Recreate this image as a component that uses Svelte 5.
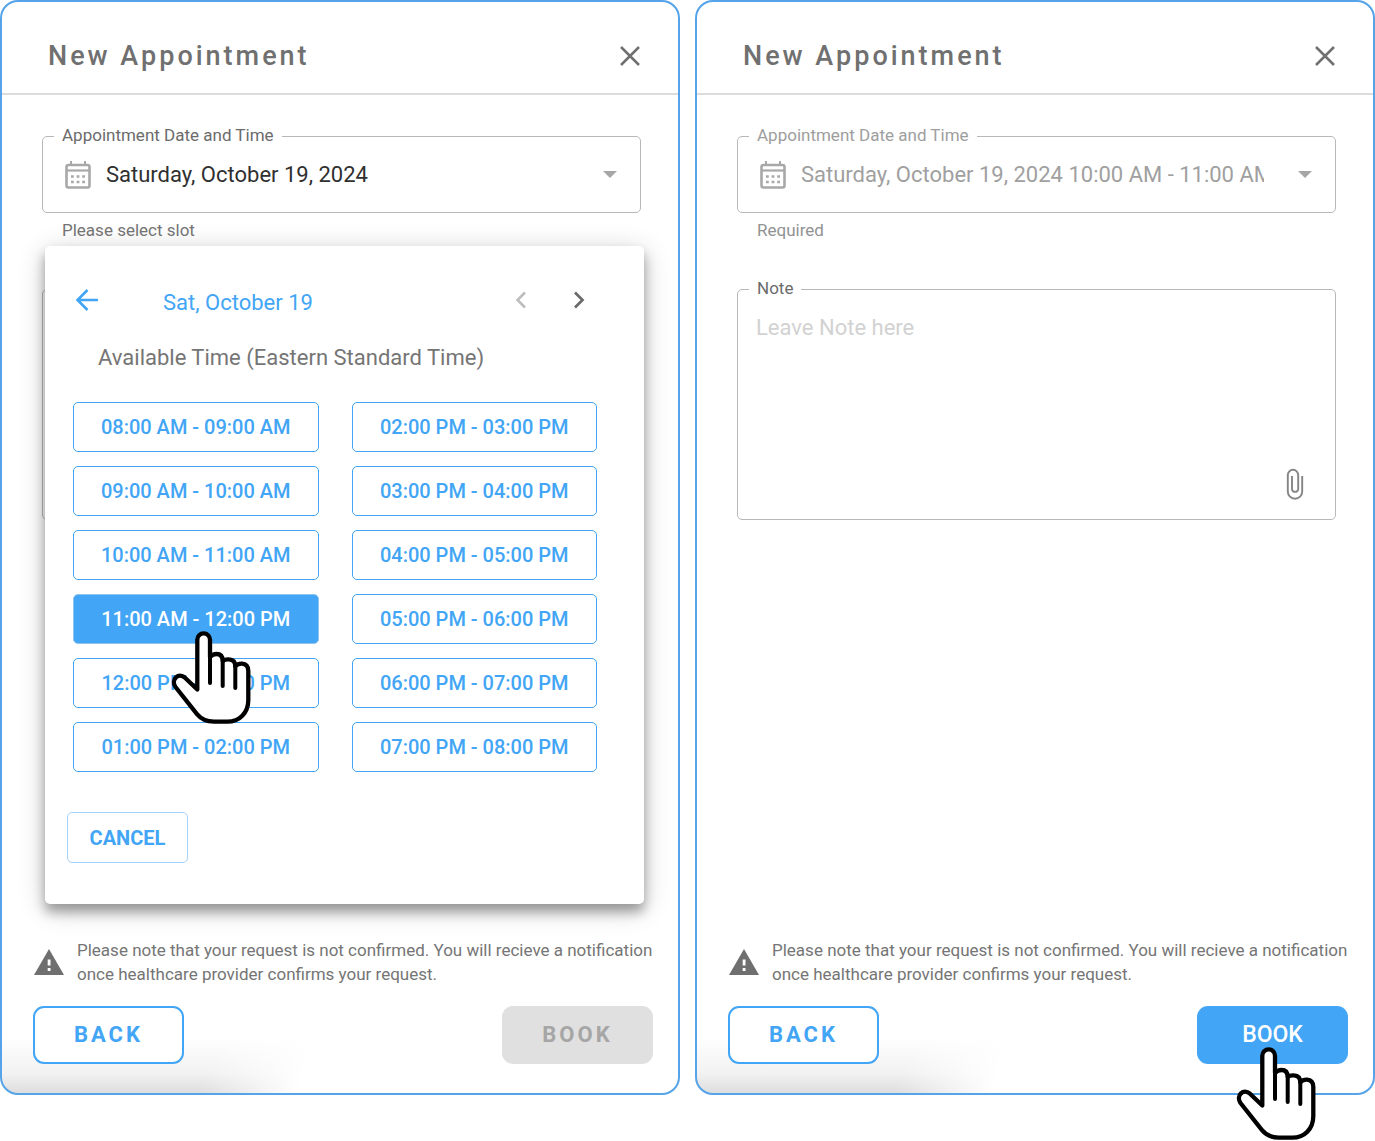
<script>
  const slots = [
    '08:00 AM - 09:00 AM',
    '09:00 AM - 10:00 AM',
    '10:00 AM - 11:00 AM',
    '11:00 AM - 12:00 PM',
    '12:00 PM - 01:00 PM',
    '01:00 PM - 02:00 PM',
    '02:00 PM - 03:00 PM',
    '03:00 PM - 04:00 PM',
    '04:00 PM - 05:00 PM',
    '05:00 PM - 06:00 PM',
    '06:00 PM - 07:00 PM',
    '07:00 PM - 08:00 PM'
  ];
  let selected = $state('11:00 AM - 12:00 PM');
  let note = $state('');
</script>

{#snippet hand()}
  <svg class="hand" viewBox="0 0 80 95" width="80" height="95" aria-hidden="true">
    <path
      d="M26.3 59.5V9.7a6.35 6.35 0 0 1 12.7 0V27q2.600-3 6.500-3 6.200 0 6.200 7 2.700-2 6.300-1.600 6.300.4 6.300 7 2.700-2.900 6.700-2.700 6.300.4 6.300 7.300V70c0 13-9 21.700-21 21.700H43c-8 0-12.500-2-17-7.500L4.500 57C-.5 49.500 7.500 42 14 47.700Z"
      fill="#fff" stroke="#000" stroke-width="4.300" stroke-linejoin="round" />
    <path d="M39 26v27M51.700 30v26M64.300 35v23" fill="none" stroke="#000" stroke-width="4" stroke-linecap="round" />
  </svg>
{/snippet}

{#snippet header()}
  <header>
    <h2>New Appointment</h2>
    <button class="icon-btn" aria-label="Close">
      <svg viewBox="0 0 24 24" width="24" height="24"><path d="M3 3l18 18M21 3L3 21" fill="none" stroke="#707070" stroke-width="2.500" /></svg>
    </button>
  </header>
{/snippet}

{#snippet dateField(id, text, disabled)}
  <div class="outlined date" class:disabled>
    <label for={id}>Appointment Date and Time</label>
    <svg class="cal" viewBox="0 0 26 28" width="26" height="28" aria-hidden="true">
      <rect x="1.500" y="4" width="23" height="22.500" rx="2" fill="none" stroke="#a8a8a8" stroke-width="2.600" />
      <path d="M1 9.500h24" stroke="#a8a8a8" stroke-width="2.200" />
      <path d="M6 0v4M20 0v4" stroke="#a8a8a8" stroke-width="2" />
      <path d="M6 15.500h14M6 21h14" stroke="#a8a8a8" stroke-width="2.600" stroke-dasharray="2.800" />
    </svg>
    <select {id} {disabled}><option>{text}</option></select>
    <svg viewBox="0 0 14 7" width="14" height="7" aria-hidden="true"><path d="M0 0h14L7 7z" fill="#a6a6a6" /></svg>
  </div>
{/snippet}

{#snippet notice()}
  <div class="notice">
    <svg viewBox="0 0 30 26" width="30" height="26" aria-hidden="true">
      <path d="M15 0l15 26H0z" fill="#6f6f6f" />
      <path d="M13.700 10.500h2.800v6h-2.800zM13.700 19h2.800v3h-2.800z" fill="#fff" />
    </svg>
    <p>Please note that your request is not confirmed. You will recieve a notification once healthcare provider confirms your request.</p>
  </div>
{/snippet}

<main>
  <section class="card">
    {@render header()}
    <div class="body">
      {@render dateField('date-a', 'Saturday, October 19, 2024', false)}
      <p class="helper">Please select slot</p>
      <div class="outlined note"></div>

      <div class="popup">
        <div class="nav">
          <button class="icon-btn" aria-label="Back to calendar">
            <svg viewBox="0 0 24 24" width="24" height="24"><path d="M23 12H3M12.500 2L2.500 12l10 10" fill="none" stroke="#42a5f5" stroke-width="2.600" /></svg>
          </button>
          <h3>Sat, October 19</h3>
          <button class="icon-btn" aria-label="Previous day" disabled>
            <svg viewBox="0 0 12 18" width="12" height="18"><path d="M10 1.500L2.500 9l7.500 7.500" fill="none" stroke="#bdbdbd" stroke-width="2.500" /></svg>
          </button>
          <button class="icon-btn" aria-label="Next day">
            <svg viewBox="0 0 12 18" width="12" height="18"><path d="M2 1.500L9.500 9 2 16.500" fill="none" stroke="#6a6a6a" stroke-width="2.700" /></svg>
          </button>
        </div>
        <p class="zone">Available Time (Eastern Standard Time)</p>
        <div class="slots">
          {#each slots as slot}
            <div class="slot-cell">
              <button class="slot" class:active={selected === slot} onclick={() => (selected = slot)}>{slot}</button>
              {#if selected === slot}
                <span class="pointer on-slot">{@render hand()}</span>
              {/if}
            </div>
          {/each}
        </div>
        <button class="cancel">CANCEL</button>
      </div>
    </div>
    {@render notice()}
    <footer>
      <button class="action back">BACK</button>
      <button class="action off" disabled>BOOK</button>
    </footer>
  </section>

  <section class="card">
    {@render header()}
    <div class="body">
      {@render dateField('date-b', 'Saturday, October 19, 2024 10:00 AM - 11:00 AM', true)}
      <p class="helper light">Required</p>
      <div class="outlined note">
        <label for="note">Note</label>
        <textarea id="note" placeholder="Leave Note here" bind:value={note}></textarea>
        <button class="icon-btn clip" aria-label="Attach file">
          <svg viewBox="0 0 18 32" width="18" height="32">
            <path d="M16.200 8v15.500a7.200 7.200 0 0 1-14.400 0V7a5.200 5.200 0 0 1 10.400 0v14.500a3.200 3.200 0 0 1-6.200 0V8" fill="none" stroke="#858585" stroke-width="1.900" />
          </svg>
        </button>
      </div>
    </div>
    {@render notice()}
    <footer>
      <button class="action back">BACK</button>
      <div class="book-wrap">
        <button class="action book">BOOK</button>
        <span class="pointer on-book">{@render hand()}</span>
      </div>
    </footer>
  </section>
</main>

<style>
  :global(body) {
    background: #fff;
    font-family: Roboto, "Liberation Sans", sans-serif;
    color: #757575;
  }
  :global(*) {
    box-sizing: border-box;
  }
  main {
    display: grid;
    grid-template-columns: 1fr 1fr;
    gap: 15px;
    min-height: 100vh;
    padding-bottom: 46px;
  }
  .card {
    display: flex;
    flex-direction: column;
    min-width: 0;
    border: 2px solid #55a3e8;
    border-radius: 18px;
    background:
      linear-gradient(110deg, rgba(255, 255, 255, 0) 560px, #fff 650px),
      linear-gradient(to top, #dedede, #f2f2f2 20px, #fff 56px);
  }
  h2, h3, p {
    margin: 0;
  }
  button, select, textarea {
    font-family: inherit;
    margin: 0;
  }
  svg {
    display: block;
    flex: none;
  }
  header {
    display: flex;
    justify-content: space-between;
    align-items: center;
    height: 93px;
    padding: 16px 36px 0 46px;
    border-bottom: 2px solid #dcdcdc;
  }
  h2 {
    font-size: 27px;
    line-height: 32px;
    font-weight: 500;
    letter-spacing: 3px;
    color: #707070;
  }
  .icon-btn {
    display: flex;
    padding: 0;
    border: 0;
    background: none;
  }
  .body {
    position: relative;
    flex: 1;
    padding: 41px 37px 0 40px;
  }
  .outlined {
    position: relative;
    display: flex;
    border: 1px solid #b8b8b8;
    border-radius: 5px;
  }
  .outlined label {
    position: absolute;
    top: -12px;
    left: 11px;
    padding: 0 8px;
    background: #fff;
    font-size: 17px;
    line-height: 20px;
    color: #6b6b6b;
  }
  .outlined.disabled label {
    color: #9e9e9e;
  }
  .date {
    align-items: center;
    height: 77px;
    padding: 0 23px 0 22px;
  }
  select {
    flex: 1;
    min-width: 0;
    margin: 0 34px 0 15px;
    padding: 0;
    border: 0;
    background: none;
    appearance: none;
    font-size: 22px;
    line-height: 28px;
    color: #303030;
    opacity: 1;
  }
  select:disabled {
    color: #a0a0a0;
    opacity: 1;
  }
  .helper {
    padding: 7px 20px 0;
    font-size: 17px;
    line-height: 20px;
    color: #757575;
  }
  .helper.light {
    color: #929292;
  }
  .note {
    height: 231px;
    margin-top: 49px;
  }
  textarea {
    flex: 1;
    padding: 24px 18px;
    border: 0;
    background: none;
    resize: none;
    outline: 0;
    font-size: 22px;
    line-height: 28px;
    color: #303030;
  }
  textarea::placeholder {
    color: #d2d2d2;
    opacity: 1;
  }
  .clip {
    align-self: flex-end;
    margin: 0 31px 19px 0;
  }
  .popup {
    position: absolute;
    z-index: 2;
    top: 151px;
    left: 43px;
    right: 34px;
    padding: 39px 47px 41px 22px;
    border-radius: 5px;
    background: #fff;
    box-shadow: 0 8px 12px rgba(0, 0, 0, 0.32), 0 5px 28px rgba(0, 0, 0, 0.2);
  }
  .nav {
    display: flex;
    align-items: center;
    height: 30px;
    padding: 0 12px 0 8px;
  }
  h3 {
    flex: 1;
    padding: 6px 0 0 64px;
    font-size: 22px;
    line-height: 28px;
    font-weight: 400;
    color: #42a5f5;
  }
  .nav .icon-btn + .icon-btn {
    margin-left: 46px;
  }
  .zone {
    padding: 29px 0 0 31px;
    font-size: 22px;
    line-height: 28px;
  }
  .slots {
    display: grid;
    grid-auto-flow: column;
    grid-template-rows: repeat(6, 50px);
    grid-auto-columns: 1fr;
    gap: 14px 33px;
    padding: 30px 0 0 6px;
  }
  .slot-cell {
    position: relative;
    display: flex;
  }
  .slot {
    flex: 1;
    padding: 0;
    border: 1px solid #42a5f5;
    border-radius: 5px;
    background: #fff;
    font-size: 20px;
    font-weight: 500;
    color: #42a5f5;
  }
  .slot.active {
    background: #42a5f5;
    border-color: #90c4f0;
    color: #fff;
  }
  .pointer {
    position: absolute;
    z-index: 3;
    pointer-events: none;
  }
  .on-slot {
    top: 36px;
    left: 98px;
  }
  .cancel {
    margin-top: 40px;
    width: 121px;
    height: 51px;
    padding: 0;
    border: 1px solid #a4d3fa;
    border-radius: 5px;
    background: #fff;
    font-size: 20px;
    font-weight: 700;
    color: #42a5f5;
  }
  .notice {
    display: flex;
    align-items: center;
    gap: 13px;
    padding: 0 22px 0 32px;
  }
  .notice p {
    font-size: 17px;
    line-height: 24px;
  }
  footer {
    display: flex;
    justify-content: space-between;
    padding: 20px 25px 29px 31px;
  }
  .action {
    width: 151px;
    height: 58px;
    padding: 0 0 2px;
    border: 0;
    border-radius: 11px;
    font-size: 22px;
    font-weight: 700;
    letter-spacing: 3px;
  }
  .back {
    border: 2px solid #42a5f5;
    background: #fff;
    color: #42a5f5;
  }
  .off {
    background: #e0e0e0;
    color: #a6a6a6;
  }
  .book-wrap {
    position: relative;
  }
  .book {
    background: #42a5f5;
    color: #fff;
    font-size: 23px;
    font-weight: 500;
    letter-spacing: 0;
  }
  .on-book {
    top: 40px;
    left: 39px;
  }
</style>
